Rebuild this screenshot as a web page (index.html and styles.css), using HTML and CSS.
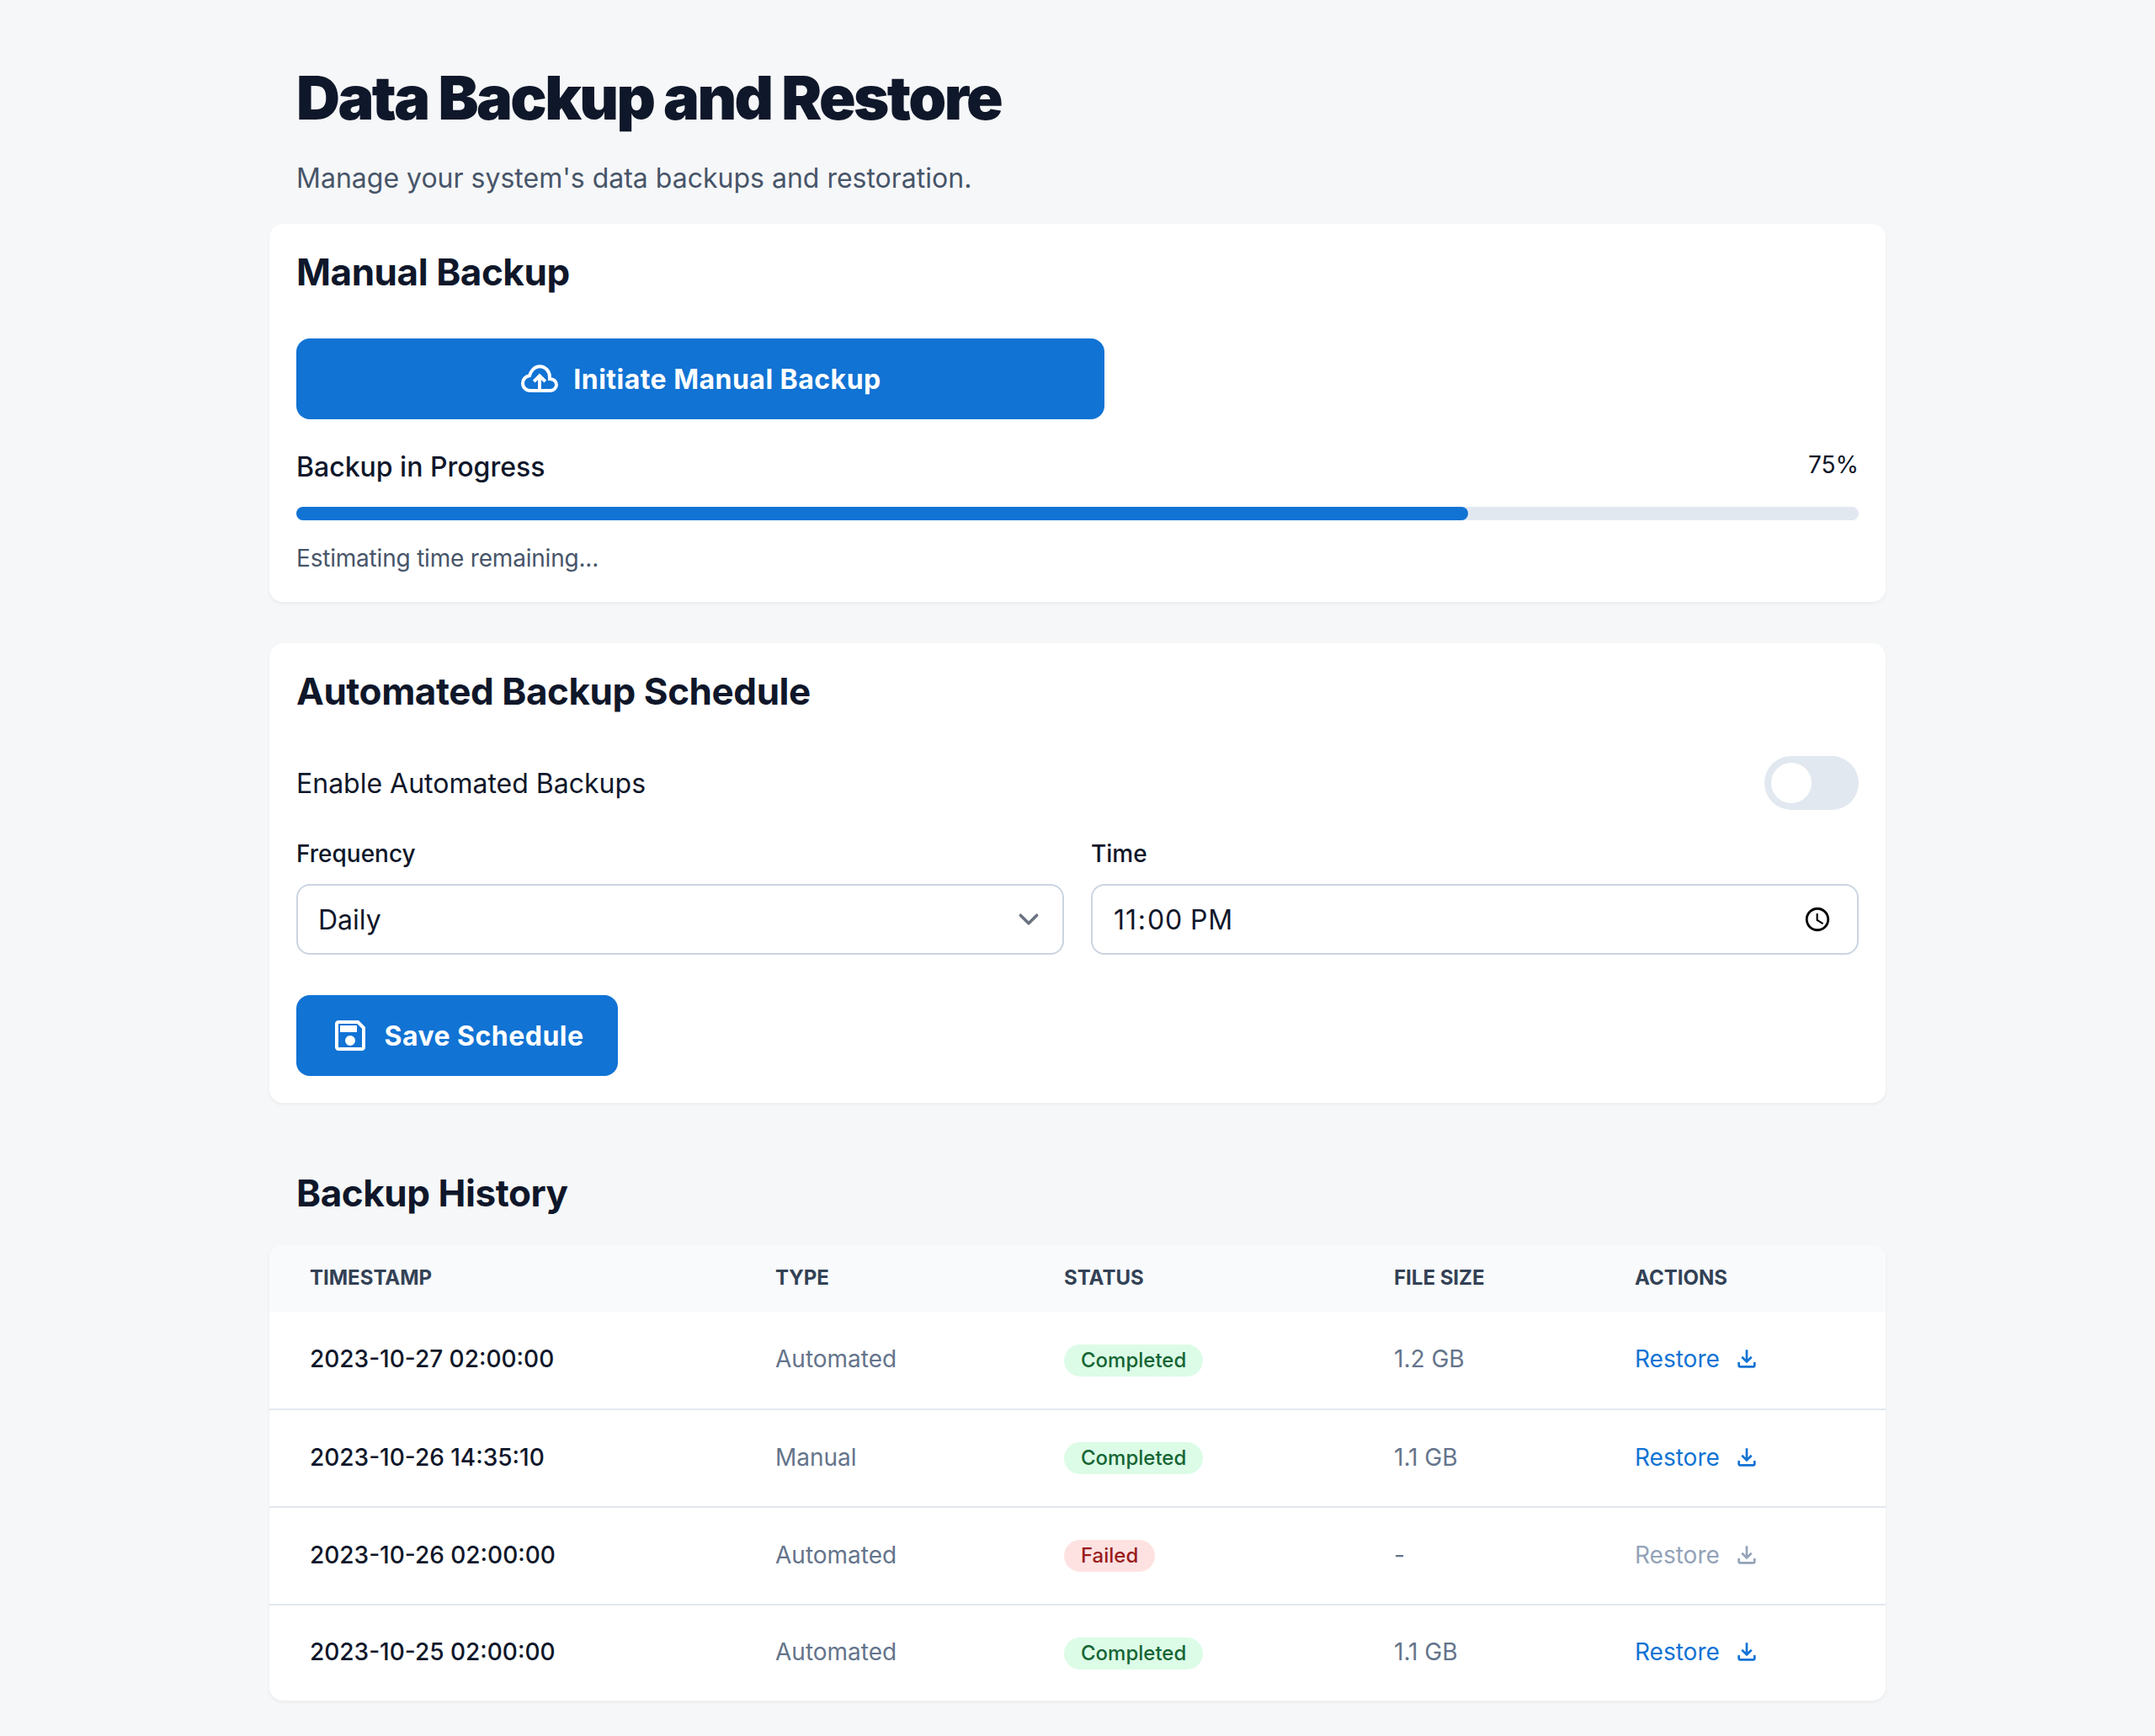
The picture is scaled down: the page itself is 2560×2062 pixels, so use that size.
FILE: index.html
```html
<!DOCTYPE html>
<html lang="en">

<head>
  <meta charset="UTF-8">
  <title>Data Backup and Restore</title>
  <link rel="stylesheet" href="styles.css">
</head>

<body>
  <main class="page">
    <header class="page-head">
      <h1>Data Backup and Restore</h1>
      <p>Manage your system's data backups and restoration.</p>
    </header>

    <section class="card card-manual">
      <h2>Manual Backup</h2>
      <button class="btn btn-wide" type="button">
        <svg class="icon-cloud" viewBox="0 0 24 24"><path d="M11 19H6.5C3.9 19 2 17 2 14.6c0-2.3 1.7-4.2 4-4.5C6.9 7 9.2 4.6 12 4.6c3.4 0 6 2.9 6 6.4v1c2.4 0 4 1.6 4 3.5S20.4 19 18.5 19H13"/><path d="M12 20v-9.5M8.6 13.6l3.4-3.4 3.4 3.4"/></svg>
        Initiate Manual Backup
      </button>
      <div class="progress-head">
        <span class="progress-label">Backup in Progress</span>
        <span class="progress-value">75%</span>
      </div>
      <div class="progress-track">
        <div class="progress-fill" style="width: 75%"></div>
      </div>
      <p class="progress-note">Estimating time remaining...</p>
    </section>

    <section class="card card-schedule">
      <h2>Automated Backup Schedule</h2>
      <div class="toggle-row">
        <span>Enable Automated Backups</span>
        <span class="toggle"><span class="toggle-knob"></span></span>
      </div>
      <div class="fields">
        <label class="field">
          <span>Frequency</span>
          <select class="control control-select">
            <option>Daily</option>
            <option>Weekly</option>
            <option>Monthly</option>
          </select>
        </label>
        <label class="field">
          <span>Time</span>
          <input class="control control-time" type="time" value="23:00">
        </label>
      </div>
      <button class="btn btn-save" type="button">
        <svg class="icon-save" viewBox="0 0 24 24"><path d="M21 7v12q0 .825-.587 1.413T19 21H5q-.825 0-1.412-.587T3 19V5q0-.825.588-1.412T5 3h12l4 4Zm-2 .85L16.15 5H5v14h14V7.85ZM12 18q1.25 0 2.125-.875T15 15q0-1.25-.875-2.125T12 12q-1.25 0-2.125.875T9 15q0 1.25.875 2.125T12 18Zm-6-8h10V6H6v4Z"/></svg>
        Save Schedule
      </button>
    </section>

    <section class="history">
      <h2>Backup History</h2>
      <div class="table-wrap">
        <table>
          <thead>
            <tr>
              <th class="col-time">Timestamp</th>
              <th class="col-type">Type</th>
              <th class="col-status">Status</th>
              <th class="col-size">File Size</th>
              <th>Actions</th>
            </tr>
          </thead>
          <tbody>
            <tr>
              <td class="cell-time">2023-10-27 02:00:00</td>
              <td>Automated</td>
              <td><span class="badge badge-ok">Completed</span></td>
              <td>1.2 GB</td>
              <td><a class="restore" href="#">Restore <svg viewBox="0 0 24 24"><path d="M12 16l-5-5 1.4-1.45 2.6 2.6V4h2v8.15l2.6-2.6L17 11l-5 5Zm-6 4q-.825 0-1.412-.587T4 18v-3h2v3h12v-3h2v3q0 .825-.587 1.413T18 20H6Z"/></svg></a></td>
            </tr>
            <tr>
              <td class="cell-time">2023-10-26 14:35:10</td>
              <td>Manual</td>
              <td><span class="badge badge-ok">Completed</span></td>
              <td>1.1 GB</td>
              <td><a class="restore" href="#">Restore <svg viewBox="0 0 24 24"><path d="M12 16l-5-5 1.4-1.45 2.6 2.6V4h2v8.15l2.6-2.6L17 11l-5 5Zm-6 4q-.825 0-1.412-.587T4 18v-3h2v3h12v-3h2v3q0 .825-.587 1.413T18 20H6Z"/></svg></a></td>
            </tr>
            <tr>
              <td class="cell-time">2023-10-26 02:00:00</td>
              <td>Automated</td>
              <td><span class="badge badge-fail">Failed</span></td>
              <td>-</td>
              <td><a class="restore restore-off" href="#">Restore <svg viewBox="0 0 24 24"><path d="M12 16l-5-5 1.4-1.45 2.6 2.6V4h2v8.15l2.6-2.6L17 11l-5 5Zm-6 4q-.825 0-1.412-.587T4 18v-3h2v3h12v-3h2v3q0 .825-.587 1.413T18 20H6Z"/></svg></a></td>
            </tr>
            <tr>
              <td class="cell-time">2023-10-25 02:00:00</td>
              <td>Automated</td>
              <td><span class="badge badge-ok">Completed</span></td>
              <td>1.1 GB</td>
              <td><a class="restore" href="#">Restore <svg viewBox="0 0 24 24"><path d="M12 16l-5-5 1.4-1.45 2.6 2.6V4h2v8.15l2.6-2.6L17 11l-5 5Zm-6 4q-.825 0-1.412-.587T4 18v-3h2v3h12v-3h2v3q0 .825-.587 1.413T18 20H6Z"/></svg></a></td>
            </tr>
          </tbody>
        </table>
      </div>
    </section>
  </main>
</body>

</html>
```

FILE: styles.css
```css
* {
  box-sizing: border-box;
  margin: 0;
  padding: 0;
}

body {
  background: #f6f7f8;
  color: #0f172a;
  font-family: Inter, "Liberation Sans", sans-serif;
}

.page {
  width: 1920px;
  margin: 0 auto;
  padding: 72px 0 42px;
}

.page-head {
  padding: 0 32px;
  margin-bottom: 30px;
}

h1 {
  font-size: 72px;
  line-height: 88px;
  font-weight: 900;
  letter-spacing: -0.036em;
}

.page-head p {
  margin-top: 28px;
  font-size: 32px;
  line-height: 48px;
  color: #475569;
}

h2 {
  font-size: 44px;
  line-height: 50px;
  font-weight: 700;
  letter-spacing: -0.01em;
}

.card {
  background: #fff;
  border-radius: 16px;
  padding: 32px;
  box-shadow: 0 2px 4px rgba(0, 0, 0, 0.05);
}

.card-manual {
  margin-bottom: 49px;
}

.card-schedule {
  margin-bottom: 82px;
}

.btn {
  display: flex;
  align-items: center;
  justify-content: center;
  gap: 16px;
  height: 96px;
  border: none;
  border-radius: 16px;
  background: #1173d4;
  color: #fff;
  font-family: inherit;
  font-size: 32px;
  font-weight: 700;
  letter-spacing: 0.015em;
}

.btn svg {
  width: 48px;
  height: 48px;
}

.btn-wide {
  width: 960px;
  margin-top: 54px;
}

.btn-save {
  width: 382px;
  margin-top: 48px;
}

.icon-cloud {
  fill: none;
  stroke: #fff;
  stroke-width: 2;
}

.icon-save {
  fill: #fff;
}

.progress-head {
  display: flex;
  justify-content: space-between;
  margin-top: 33px;
  font-size: 32px;
  line-height: 48px;
}

.progress-label {
  font-weight: 500;
}

.progress-value {
  font-size: 28px;
  line-height: 42px;
}

.progress-track {
  height: 16px;
  margin-top: 23px;
  border-radius: 8px;
  background: #e2e8f0;
}

.progress-fill {
  height: 100%;
  border-radius: 8px;
  background: #1173d4;
}

.progress-note {
  margin-top: 25px;
  font-size: 28px;
  line-height: 40px;
  letter-spacing: -0.2px;
  color: #475569;
}

.toggle-row {
  display: flex;
  align-items: center;
  justify-content: space-between;
  margin-top: 52px;
  font-size: 32px;
}

.toggle {
  display: block;
  width: 112px;
  height: 64px;
  padding: 8px;
  border-radius: 32px;
  background: #e2e8f0;
}

.toggle-knob {
  display: block;
  width: 48px;
  height: 48px;
  border-radius: 50%;
  background: #fff;
}

.fields {
  display: grid;
  grid-template-columns: 1fr 1fr;
  gap: 32px;
  margin-top: 32px;
}

.field {
  display: flex;
  flex-direction: column;
  gap: 16px;
  font-size: 28px;
  line-height: 40px;
  font-weight: 500;
}

.control {
  width: 100%;
  height: 84px;
  padding: 0 24px;
  border: 2px solid #cbd5e1;
  border-radius: 16px;
  background: #fff;
  color: #0f172a;
  font-family: inherit;
  font-size: 32px;
}

.control-select {
  appearance: none;
  background-image: url("data:image/svg+xml,%3csvg xmlns='http://www.w3.org/2000/svg' fill='none' viewBox='0 0 20 20'%3e%3cpath stroke='%236b7280' stroke-linecap='round' stroke-linejoin='round' stroke-width='1.5' d='M6 8l4 4 4-4'/%3e%3c/svg%3e");
  background-position: right 16px center;
  background-repeat: no-repeat;
  background-size: 48px;
}

.control-time {
  padding-right: 27px;
  letter-spacing: 0.9px;
}

.history h2 {
  padding: 0 32px;
  margin-bottom: 37px;
}

.table-wrap {
  overflow: hidden;
  border-radius: 16px;
  background: #fff;
  box-shadow: 0 2px 4px rgba(0, 0, 0, 0.05);
}

table {
  width: 100%;
  border-collapse: collapse;
  table-layout: fixed;
}

th {
  height: 79px;
  padding: 0 0 2px 48px;
  background: #f8fafc;
  color: #334155;
  font-size: 24px;
  font-weight: 700;
  text-align: left;
  text-transform: uppercase;
}

.col-time {
  width: 553px;
}

.col-type {
  width: 343px;
}

.col-status {
  width: 392px;
}

.col-size {
  width: 286px;
}

td {
  height: 116px;
  padding: 0 0 3px 48px;
  border-bottom: 2px solid #e2e8f0;
  color: #64748b;
  font-size: 28px;
}

tr:last-child td {
  height: 114px;
  border-bottom: none;
}

td.cell-time {
  color: #0f172a;
  font-weight: 500;
}

.badge {
  display: inline-block;
  margin-top: 3px;
  padding: 0 20px;
  border-radius: 19px;
  font-size: 24px;
  line-height: 38px;
  font-weight: 500;
}

.badge-ok {
  background: #dcfce7;
  color: #166534;
}

.badge-fail {
  background: #fee2e2;
  color: #991b1b;
}

.restore {
  display: inline-flex;
  align-items: center;
  gap: 16px;
  color: #1173d4;
  fill: #1173d4;
  text-decoration: none;
}

.restore svg {
  width: 32px;
  height: 32px;
}

.restore-off {
  color: #94a3b8;
  fill: #94a3b8;
}
```
